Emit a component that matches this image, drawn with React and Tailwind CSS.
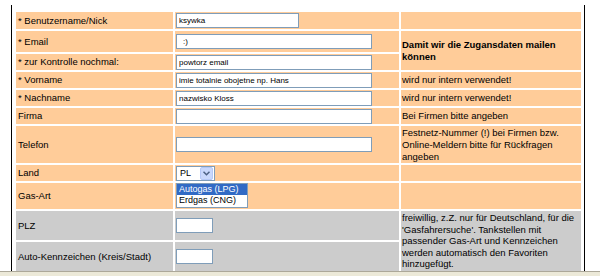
const orange = 'bg-[#ffcc99]';
const gray = 'bg-[#cccccc]';

const Field = ({ w = 'w-[196px]', value = '', pad = 'px-[2px]' }) => (
  <input
    readOnly
    defaultValue={value}
    className={`block h-[15px] ${w} border border-[#7f9db9] bg-white ${pad} text-[8px] leading-[13px] text-black outline-none`}
  />
);

const App = () => {
  const label = 'pl-[2px] align-middle text-left font-normal';
  const mid = 'pl-[1px] align-middle';
  const note = 'pl-[1px] align-middle text-left';

  return (
    <div className="w-[600px] h-[276px] bg-white overflow-hidden flex flex-col font-['Liberation_Sans',Arial,sans-serif] text-[9.5px] leading-[12px] text-black">
      <div className="flex-1 min-h-0 flex pt-[5px]">
        <div className="w-[11px] shrink-0" />
        <div className="w-[574px] shrink-0 border-l border-r border-black pt-[5px] overflow-hidden">
          <table className="ml-[2px] w-[569px] table-fixed border-separate border-spacing-[2px]">
            <colgroup>
              <col className="w-[157px]" />
              <col className="w-[224px]" />
              <col className="w-[180px]" />
            </colgroup>
            <tbody>
              <tr className="h-[17px]">
                <td className={`${orange} ${label}`}>* Benutzername/Nick</td>
                <td className={`${orange} ${mid}`}><Field w="w-[123px]" value="ksywka" /></td>
                <td className={orange}></td>
              </tr>
              <tr className="h-[21px]">
                <td className={`${orange} ${label}`}>* Email</td>
                <td className={`${orange} ${mid}`}><Field value=":)" pad="pl-[6px] pr-[2px]" /></td>
                <td rowSpan={2} className={`${orange} ${note} font-bold`}>
                  Damit wir die Zugansdaten mailen<br />können
                </td>
              </tr>
              <tr className="h-[16px]">
                <td className={`${orange} ${label}`}>* zur Kontrolle nochmal:</td>
                <td className={`${orange} ${mid}`}><Field value="powtorz email" /></td>
              </tr>
              <tr className="h-[16px]">
                <td className={`${orange} ${label}`}>* Vorname</td>
                <td className={`${orange} ${mid}`}><Field value="imie totalnie obojetne np. Hans" /></td>
                <td className={`${orange} ${note}`}>wird nur intern verwendet!</td>
              </tr>
              <tr className="h-[16px]">
                <td className={`${orange} ${label}`}>* Nachname</td>
                <td className={`${orange} ${mid}`}><Field value="nazwisko Kloss" /></td>
                <td className={`${orange} ${note}`}>wird nur intern verwendet!</td>
              </tr>
              <tr className="h-[16px]">
                <td className={`${orange} ${label}`}>Firma</td>
                <td className={`${orange} ${mid}`}><Field /></td>
                <td className={`${orange} ${note}`}>Bei Firmen bitte angeben</td>
              </tr>
              <tr className="h-[37px]">
                <td className={`${orange} ${label}`}>Telefon</td>
                <td className={`${orange} ${mid}`}><Field /></td>
                <td className={`${orange} ${note}`}>
                  Festnetz-Nummer (!) bei Firmen bzw.<br />Online-Meldern bitte für Rückfragen<br />angeben
                </td>
              </tr>
              <tr className="h-[16px]">
                <td className={`${orange} ${label}`}>Land</td>
                <td className={`${orange} ${mid}`}>
                  <div className="flex h-[15px] w-[39px] items-center border border-[#7f9db9] bg-white">
                    <span className="flex-1 pl-[3px] text-[9px]">PL</span>
                    <span className="mr-[1px] flex h-[13px] w-[13px] items-center justify-center rounded-[2px] border border-[#b5c8f7] bg-[#c9d8fc]">
                      <svg width="7" height="5" viewBox="0 0 7 5">
                        <path d="M0.5 0.8 L3.5 3.8 L6.5 0.8" fill="none" stroke="#4d6185" strokeWidth="1.5" />
                      </svg>
                    </span>
                  </div>
                </td>
                <td className={orange}></td>
              </tr>
              <tr className="h-[26px]">
                <td className={`${orange} ${label}`}>Gas-Art</td>
                <td className={`${orange} pl-[1px] align-top`}>
                  <div className="w-[72px] h-[25px] border border-[#7f9db9] bg-white text-[9px] leading-[11px]">
                    <div className="bg-[#316ac5] pl-[2px] text-white">Autogas (LPG)</div>
                    <div className="pl-[2px]">Erdgas (CNG)</div>
                  </div>
                </td>
                <td className={orange}></td>
              </tr>
              <tr className="h-[29px]">
                <td className={`${gray} ${label}`}>PLZ</td>
                <td className={`${gray} ${mid}`}><Field w="w-[37px]" /></td>
                <td rowSpan={2} className={`${gray} ${note} leading-[11.5px]`}>
                  freiwillig, z.Z. nur für Deutschland, für die<br />'Gasfahrersuche'. Tankstellen mit<br />passender Gas-Art und Kennzeichen<br />werden automatisch den Favoriten<br />hinzugefügt.
                </td>
              </tr>
              <tr className="h-[29px]">
                <td className={`${gray} ${label}`}>Auto-Kennzeichen (Kreis/Stadt)</td>
                <td className={`${gray} ${mid}`}><Field w="w-[37px]" /></td>
              </tr>
            </tbody>
          </table>
        </div>
      </div>
      <div className="h-[5px] shrink-0 border-t border-[#aca899] bg-[#ece9d8]" />
    </div>
  );
};

export default App;
